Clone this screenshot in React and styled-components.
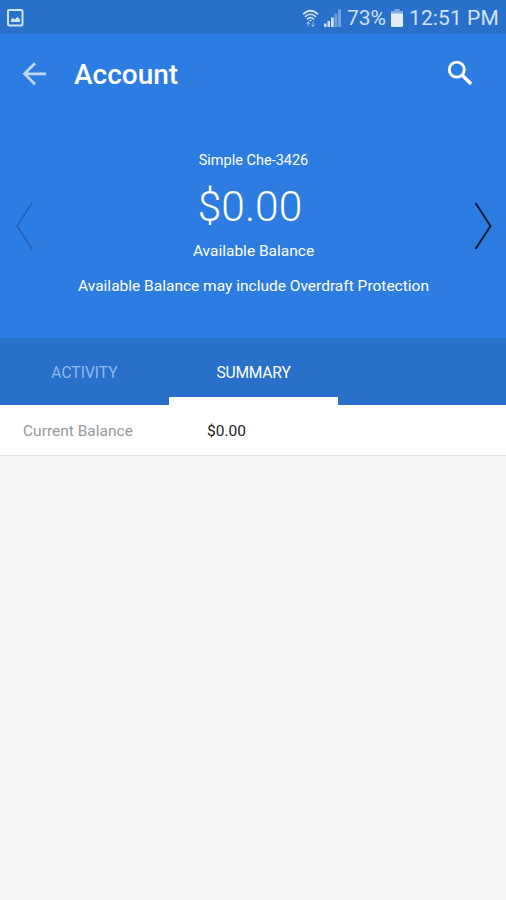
import React from 'react'
import styled, { createGlobalStyle, css } from 'styled-components'

const colors = {
	brand: '#2c7ce1',
	brandDark: '#2870c9',
	page: '#f7f7f7',
	border: '#e2e2e2',
	status: '#d0e2f8',
}

const GlobalStyle = createGlobalStyle`
	* {
		box-sizing: border-box;
	}

	body {
		margin: 0;
		background: ${colors.page};
		font-family: Roboto, 'Liberation Sans', sans-serif;
	}

	h1, p {
		margin: 0;
	}

	svg {
		display: block;
		flex: none;
	}
`

const Screen = styled.div`
	width: 100%;
	min-height: 100vh;
	background: ${colors.page};
`

const StatusBar = styled.div`
	display: flex;
	align-items: center;
	height: 34px;
	padding: 2px 7px 0 7px;
	background: ${colors.brandDark};
	color: ${colors.status};
	font-size: 21px;
	line-height: 32px;
	white-space: nowrap;
`

const StatusIcons = styled.div`
	display: flex;
	align-items: center;
	gap: 5px;
	margin-left: auto;
`

const Percent = styled.span`
	width: 39px;
	margin-left: 1px;
	letter-spacing: -0.1px;
`

const Clock = styled.span`
	width: 90px;
	margin-left: 1px;
	letter-spacing: 0.1px;
`

const Hero = styled.header`
	height: 304px;
	background: ${colors.brand};
	color: white;
`

const Toolbar = styled.div`
	display: flex;
	align-items: center;
	height: 80px;
	padding: 0 33px 0 22px;
`

const IconButton = styled.button`
	display: flex;
	padding: 0;
	border: 0;
	background: none;
	color: ${({ $color }) => $color || 'white'};
	cursor: pointer;
`

const Title = styled.h1`
	flex: 1;
	padding: 2px 0 0 26px;
	font-size: 28px;
	font-weight: 500;
	line-height: 32px;
`

const Carousel = styled.div`
	display: flex;
	justify-content: space-between;
	padding: 36px 13px 0 14px;
`

const ArrowSlot = styled.div`
	padding-top: 51px;
`

const Balance = styled.div`
	display: flex;
	flex-direction: column;
	align-items: center;
	padding-top: 1px;
	font-size: 15.5px;
	line-height: 20px;
	white-space: nowrap;
`

const AccountName = styled.p`
	font-size: 14.5px;
`

const Amount = styled.p`
	padding: 11px 7px 10px 0;
	font-size: 42.5px;
	font-weight: 300;
	line-height: 49px;
`

const Note = styled.p`
	margin-top: 15px;
`

const Tabs = styled.nav`
	display: grid;
	grid-template-columns: 169px 169px 1fr;
	height: 67px;
	background: ${colors.brandDark};
`

const activeTab = css`
	border-bottom-color: white;
	color: white;
`

const Tab = styled.div`
	padding-top: 25px;
	border-bottom: 8px solid transparent;
	color: #90baf0;
	font-size: 15.6px;
	letter-spacing: ${({ $active }) => ($active ? '-0.2px' : '0')};
	line-height: 20px;
	text-align: center;
	${({ $active }) => $active && activeTab}
`

const Row = styled.div`
	display: flex;
	align-items: center;
	height: 51px;
	padding: 2px 23px 0;
	border-bottom: 1px solid ${colors.border};
	background: white;
	font-size: 15.5px;
	line-height: 20px;
`

const Label = styled.span`
	width: 184px;
	color: #999;
`

const Value = styled.span`
	color: #222;
`

const PictureIcon = () => (
	<svg width="17" height="18" viewBox="0 0 17 18" fill="none">
		<rect x="1" y="1" width="14.5" height="15.5" rx="1.5" stroke="currentColor" strokeWidth="2" />
		<path d="M4 13V10.5L6 9l2 1.5 2.5-2.8 2.5 3V13z" fill="currentColor" />
	</svg>
)

const WifiIcon = () => (
	<svg width="17" height="19" viewBox="0 0 17 19" fill="none" stroke="currentColor">
		<path d="M1 5.3Q8.5-1.7 16 5.3" strokeWidth="1.8" />
		<path d="M3 7.8Q8.5 2.7 14 7.8M5 10.3Q8.5 7 12 10.3" strokeWidth="1.6" />
		<path d="M7 11h3L8.5 12.7z" fill="currentColor" stroke="none" />
		<path d="M6.2 12.5v5M4.7 15l1.5-2 1.5 2M11 12.5v5M9.5 15.5l1.5 2 1.5-2" strokeWidth="1" opacity="0.65" />
	</svg>
)

const SignalIcon = () => (
	<svg width="17" height="18" viewBox="0 0 17 18" fill="currentColor">
		<path d="M0 14.5h2.5V18H0zM3.5 12h2.5V18h-2.5zM7 8.5h2.8V18H7z" />
		<path d="M10.5 4.5h2.8V18h-2.8zM14 0.5H17V18h-3z" opacity="0.45" />
	</svg>
)

const BatteryIcon = () => (
	<svg width="12" height="18" viewBox="0 0 12 18">
		<path d="M3.5 0h5v2H12v3H0V2h3.5z" fill="#80abe3" />
		<path d="M0 4.5h12V17a1 1 0 0 1-1 1H1a1 1 0 0 1-1-1z" fill="#e5effc" />
	</svg>
)

const BackIcon = () => (
	<svg width="26" height="26" viewBox="0 0 26 26" fill="none" stroke="currentColor" strokeWidth="2.7">
		<path d="M24 12.8H3M13 2.3L2.5 12.8 13 23.3" />
	</svg>
)

const SearchIcon = () => (
	<svg width="26" height="28" viewBox="0 0 26 28" fill="none" stroke="currentColor">
		<circle cx="9.8" cy="9.6" r="7.5" strokeWidth="2.9" />
		<path d="M15.3 15.3L24 24" strokeWidth="3.6" />
	</svg>
)

const Chevron = ({ left }) => (
	<svg width="19" height="50" viewBox="0 0 19 50" fill="none" stroke="currentColor" strokeWidth={left ? 1.5 : 2}>
		<path d={left ? 'M18 2L3 25l15 23' : 'M1.5 2l15 23-15 23'} />
	</svg>
)

const App = () => (
	<>
		<GlobalStyle />
		<Screen>
			<StatusBar>
				<PictureIcon />
				<StatusIcons>
					<WifiIcon />
					<SignalIcon />
					<Percent>73%</Percent>
					<BatteryIcon />
					<Clock>12:51 PM</Clock>
				</StatusIcons>
			</StatusBar>

			<Hero>
				<Toolbar>
					<IconButton $color="#bed8f8" aria-label="Back">
						<BackIcon />
					</IconButton>
					<Title>Account</Title>
					<IconButton aria-label="Search">
						<SearchIcon />
					</IconButton>
				</Toolbar>

				<Carousel>
					<ArrowSlot>
						<IconButton $color="#2260b5" aria-label="Previous account">
							<Chevron left />
						</IconButton>
					</ArrowSlot>
					<Balance>
						<AccountName>Simple Che-3426</AccountName>
						<Amount>$0.00</Amount>
						<p>Available Balance</p>
						<Note>Available Balance may include Overdraft Protection</Note>
					</Balance>
					<ArrowSlot>
						<IconButton $color="#071b36" aria-label="Next account">
							<Chevron />
						</IconButton>
					</ArrowSlot>
				</Carousel>
			</Hero>

			<Tabs>
				<Tab>ACTIVITY</Tab>
				<Tab $active>SUMMARY</Tab>
			</Tabs>

			<Row>
				<Label>Current Balance</Label>
				<Value>$0.00</Value>
			</Row>
		</Screen>
	</>
)

export default App
